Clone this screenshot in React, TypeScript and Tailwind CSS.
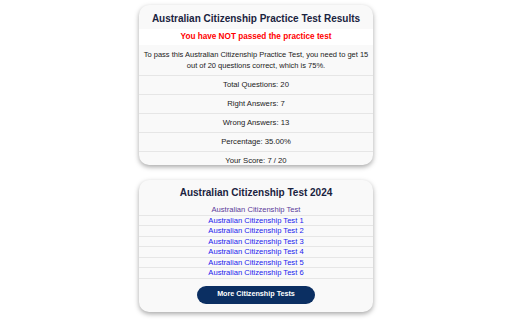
const stats = [
  "Total Questions: 20",
  "Right Answers: 7",
  "Wrong Answers: 13",
  "Percentage: 35.00%",
  "Your Score: 7 / 20",
];

const links = [
  "Australian Citizenship Test 1",
  "Australian Citizenship Test 2",
  "Australian Citizenship Test 3",
  "Australian Citizenship Test 4",
  "Australian Citizenship Test 5",
  "Australian Citizenship Test 6",
];

export default function App() {
  return (
    <div className="flex min-h-[320px] flex-col items-center bg-white pt-[5px] font-['Liberation_Sans',Arial,sans-serif] text-[#222]">
      <section className="h-[160px] w-[234px] overflow-hidden rounded-[10px] bg-[#f9f9f9] shadow-[0_2px_5px_rgba(0,0,0,0.35)]">
        <h1 className="pt-[7px] pb-[4px] text-center text-[10px] font-bold leading-[13px] text-[#1a2340]">
          Australian Citizenship Practice Test Results
        </h1>
        <p className="bg-white py-[2px] text-center text-[8.2px] font-bold leading-[12px] text-[#ff0000]">
          You have NOT passed the practice test
        </p>
        <p className="border-b border-[#e6e6e6] px-[2px] pt-[4px] pb-[4px] text-center text-[7.5px] leading-[11px]">
          To pass this Australian Citizenship Practice Test, you need to get 15 out of 20 questions correct, which is 75%.
        </p>
        {stats.map((s, i) => (
          <div
            key={s}
            className={`text-center text-[7.7px] leading-[18px] ${i < stats.length - 1 ? "border-b border-[#e6e6e6]" : ""}`}
          >
            {s}
          </div>
        ))}
      </section>

      <section className="mt-[15px] w-[234px] overflow-hidden rounded-[10px] bg-[#f9f9f9] pb-[8px] shadow-[0_2px_5px_rgba(0,0,0,0.35)]">
        <h2 className="pt-[6px] pb-[6px] text-center text-[10px] font-bold leading-[13px] text-[#1a2340]">
          Australian Citizenship Test 2024
        </h2>
        <div className="border-b border-[#e6e6e6] text-center text-[7.6px] leading-[9.5px] text-[#5b3a99]">
          Australian Citizenship Test
        </div>
        {links.map((l) => (
          <div key={l} className="border-b border-[#e6e6e6] text-center text-[7.6px] leading-[9.5px] text-[#2222ee]">
            {l}
          </div>
        ))}
        <div className="mt-[7px] flex justify-center">
          <button className="h-[18px] w-[118px] rounded-full bg-[#0b2f62] text-[7.2px] font-bold text-white">
            More Citizenship Tests
          </button>
        </div>
      </section>
    </div>
  );
}
